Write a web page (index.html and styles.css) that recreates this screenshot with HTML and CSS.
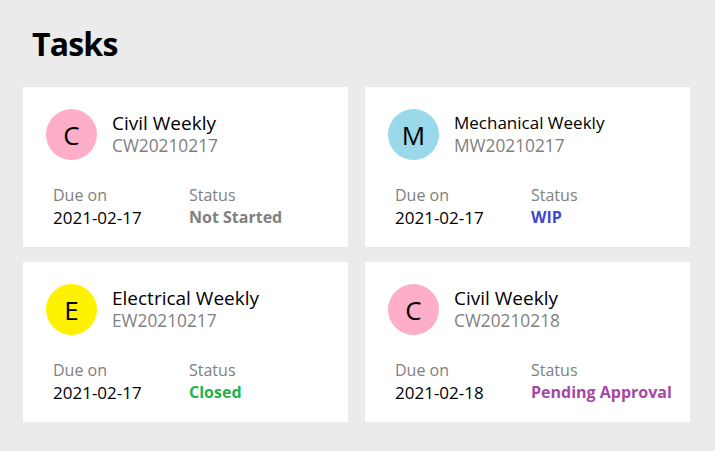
FILE: index.html
```html
<!DOCTYPE html>
<html>
<head>
<meta charset="utf-8">
<link rel="stylesheet" href="styles.css">
</head>
<body>
<div class="page">
  <h1 class="title">Tasks</h1>
  <div class="grid">
    <div class="card">
      <div class="head">
        <div class="avatar pink">C</div>
        <div class="names">
          <div class="name">Civil Weekly</div>
          <div class="code">CW20210217</div>
        </div>
      </div>
      <div class="meta">
        <div class="col"><div class="label">Due on</div><div class="value">2021-02-17</div></div>
        <div class="col"><div class="label">Status</div><div class="status gray">Not Started</div></div>
      </div>
    </div>
    <div class="card">
      <div class="head">
        <div class="avatar blue">M</div>
        <div class="names">
          <div class="name small">Mechanical Weekly</div>
          <div class="code">MW20210217</div>
        </div>
      </div>
      <div class="meta">
        <div class="col"><div class="label">Due on</div><div class="value">2021-02-17</div></div>
        <div class="col"><div class="label">Status</div><div class="status indigo">WIP</div></div>
      </div>
    </div>
    <div class="card">
      <div class="head">
        <div class="avatar yellow">E</div>
        <div class="names">
          <div class="name">Electrical Weekly</div>
          <div class="code">EW20210217</div>
        </div>
      </div>
      <div class="meta">
        <div class="col"><div class="label">Due on</div><div class="value">2021-02-17</div></div>
        <div class="col"><div class="label">Status</div><div class="status green">Closed</div></div>
      </div>
    </div>
    <div class="card">
      <div class="head">
        <div class="avatar pink">C</div>
        <div class="names">
          <div class="name">Civil Weekly</div>
          <div class="code">CW20210218</div>
        </div>
      </div>
      <div class="meta">
        <div class="col"><div class="label">Due on</div><div class="value">2021-02-18</div></div>
        <div class="col"><div class="label">Status</div><div class="status purple">Pending Approval</div></div>
      </div>
    </div>
  </div>
</div>
</body>
</html>
```
FILE: styles.css
```css
html, body {
  margin: 0;
  padding: 0;
  background: #ebebeb;
}
body {
  font-family: "Open Sans", "Noto Sans", sans-serif;
  color: #000;
}
.page {
  padding: 22px 23px 0 23px;
}
.title {
  margin: 0 0 0 9px;
  font-size: 32px;
  font-weight: 700;
  letter-spacing: -0.8px;
  line-height: 44px;
  height: 65px;
}
.grid {
  display: grid;
  grid-template-columns: 325px 325px;
  column-gap: 17px;
  row-gap: 15px;
}
.card {
  background: #fff;
  height: 160px;
  box-sizing: border-box;
  padding: 22px 23px 0 23px;
}
.head {
  display: flex;
  align-items: center;
  gap: 15px;
}
.avatar {
  width: 51px;
  height: 51px;
  border-radius: 50%;
  display: flex;
  align-items: center;
  justify-content: center;
  font-size: 26px;
  flex: none;
}
.pink { background: #ffaec9; }
.blue { background: #99d9ea; }
.yellow { background: #fff200; }
.names {
  margin-top: -2px;
  white-space: nowrap;
}
.name {
  font-size: 19px;
  line-height: 24px;
}
.name.small {
  font-size: 17px;
}
.code {
  font-size: 17.3px;
  line-height: 22px;
  color: #808080;
}
.meta {
  display: flex;
  margin-top: 24px;
  padding-left: 7px;
}
.col {
  width: 136px;
  white-space: nowrap;
}
.label {
  font-size: 16px;
  line-height: 22px;
  color: #808080;
}
.value {
  font-size: 17px;
  line-height: 23px;
}
.status {
  font-size: 16px;
  line-height: 23px;
  font-weight: 700;
}
.gray { color: #808080; }
.indigo { color: #3f48cc; }
.green { color: #22b14c; }
.purple { color: #a349a4; }
```
